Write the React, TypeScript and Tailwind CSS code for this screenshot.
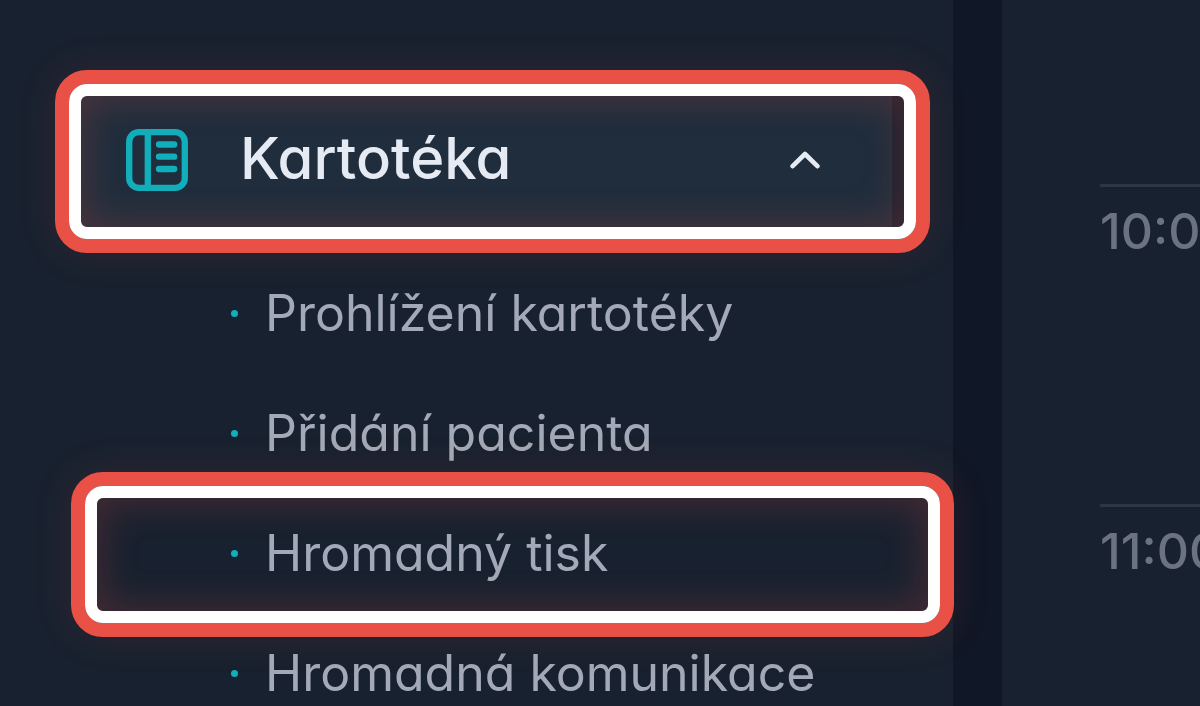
import { useState } from 'react'

const recordLinks = [
  { href: '#prohlizeni', label: 'Prohlížení kartotéky', highlighted: false },
  { href: '#pridani', label: 'Přidání pacienta', highlighted: false },
  { href: '#tisk', label: 'Hromadný tisk', highlighted: true },
  { href: '#komunikace', label: 'Hromadná komunikace', highlighted: false },
]

const hours = ['10:00', '11:00']

function RecordsIcon() {
  return (
    <svg className="size-[62px] shrink-0 text-[#11afbb]" viewBox="0 0 62 62" fill="none" stroke="currentColor" strokeWidth={6.3} strokeLinecap="round" aria-hidden="true">
      <rect x="3.2" y="3.2" width="55.6" height="55.6" rx="9.5" />
      <path d="M21.8 4v54M33 15.5h15.2M33 27.7h15.2M33 40h15.2" />
    </svg>
  )
}

function Chevron({ open }: { open: boolean }) {
  return (
    <svg className={open ? 'h-[18px] w-[30px]' : 'h-[18px] w-[30px] rotate-180'} viewBox="0 0 30 18" fill="none" stroke="currentColor" strokeWidth={4.6} strokeLinecap="round" strokeLinejoin="round" aria-hidden="true">
      <path d="M2.6 15.2 15 3l12.4 12.2" />
    </svg>
  )
}

// Red and white frame with a soft glow, drawn over the item it marks
function Highlight({ className }: { className: string }) {
  return (
    <span className={`pointer-events-none absolute z-10 flex rounded-[32px] border-[14px] border-[#ea5146] shadow-[0_0_40px_rgba(234,81,70,0.12)] ${className}`}>
      <span className="flex flex-1 rounded-[18px] border-12 border-white">
        <span className="flex-1 rounded-[6px] shadow-[inset_0_0_36px_6px_rgba(234,81,70,0.2)]" />
      </span>
    </span>
  )
}

function Sidebar() {
  const [open, setOpen] = useState(true)

  return (
    <nav className="min-w-0 flex-1 bg-[#18212f] pt-[92px]">
      <div className="relative mr-[61px] ml-[81px]">
        <button
          type="button"
          onClick={() => setOpen(!open)}
          aria-expanded={open}
          className="flex h-[135px] w-full items-center bg-[#1f2d3c] pr-[72px] pl-[45px] text-[#e6eaf3]"
        >
          <RecordsIcon />
          <span className="ml-[52px] flex-1 pb-1 text-left text-[58px] leading-[64px] font-medium">Kartotéka</span>
          <Chevron open={open} />
        </button>
        <Highlight className="-top-[22px] -right-[38px] -bottom-[26px] -left-[26px]" />
      </div>

      {open && (
        <ul className="mt-[26px]">
          {recordLinks.map((link) => (
            <li key={link.href} className="relative">
              <a href={link.href} className="flex h-[120px] items-center gap-[27px] pl-[231px] text-[50px] leading-[60px] whitespace-nowrap text-[#a3a9b6]">
                <span className="size-[7px] shrink-0 rounded-full bg-[#11afbb]" />
                {link.label}
              </a>
              {link.highlighted && <Highlight className="-top-[21px] -right-px -bottom-[24px] left-[71px]" />}
            </li>
          ))}
        </ul>
      )}
    </nav>
  )
}

export default function App() {
  return (
    <div className="flex h-screen overflow-hidden bg-[#101726] font-['Inter',sans-serif] [font-feature-settings:'cv11']">
      <Sidebar />
      <main className="ml-[49px] w-[198px] shrink-0 overflow-hidden bg-[#18212f] pt-[184px] pl-[98px]">
        {hours.map((hour) => (
          <div key={hour} className="h-[320px] border-t-3 border-[#2c3745] pt-[14px] text-[50px] leading-[60px] font-medium whitespace-nowrap text-[#6b7280]">
            {hour}
          </div>
        ))}
      </main>
    </div>
  )
}
